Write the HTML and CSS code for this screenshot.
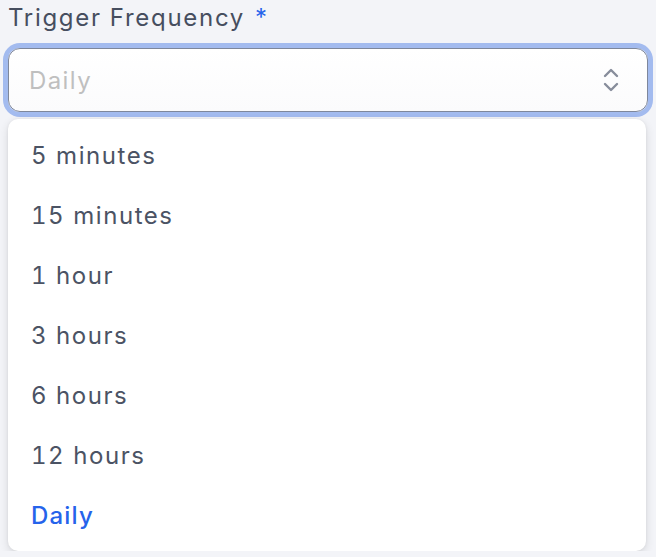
FILE: index.html
```html
<!DOCTYPE html>
<html>
<head>
<meta charset="utf-8">
<link rel="stylesheet" href="styles.css">
</head>
<body>
<div class="field">
  <label class="label">Trigger Frequency <span class="req">*</span></label>
  <div class="select">
    <span class="placeholder">Daily</span>
    <svg class="chev" width="16" height="26" viewBox="0 0 16 26" fill="none" stroke="#878d9b" stroke-width="2.4" stroke-linecap="round" stroke-linejoin="round">
      <path d="M2 9 L8 3 L14 9"/>
      <path d="M2 17 L8 23 L14 17"/>
    </svg>
  </div>
  <ul class="menu">
    <li class="item">5 minutes</li>
    <li class="item">15 minutes</li>
    <li class="item">1 hour</li>
    <li class="item">3 hours</li>
    <li class="item">6 hours</li>
    <li class="item">12 hours</li>
    <li class="item selected">Daily</li>
  </ul>
</div>
</body>
</html>
```
FILE: styles.css
```css
html, body {
  margin: 0;
  padding: 0;
  background: #f3f4f8;
  font-family: Inter, "Noto Sans", sans-serif;
  font-variant-numeric: tabular-nums;
}
.field {
  padding: 0 8px;
}
.label {
  display: block;
  font-size: 24px;
  line-height: 36px;
  color: #464e5f;
  font-weight: 400;
  letter-spacing: 1.7px;
}
.req {
  color: #2563eb;
}
.select {
  margin-top: 12px;
  height: 64px;
  box-sizing: border-box;
  border: 1.5px solid #7e879b;
  border-radius: 12px;
  box-shadow: 0 0 0 5px #a3bbef;
  background: linear-gradient(#ffffff, #fbfbfc);
  display: flex;
  align-items: center;
  justify-content: space-between;
  padding: 0 28px 0 20px;
}
.placeholder {
  font-size: 24px;
  color: #bfbfbf;
  letter-spacing: 1.4px;
}
.chev {
  display: block;
}
.menu {
  list-style: none;
  margin: 7px 2px 0 0;
  padding: 6px 0;
  background: #fff;
  border-radius: 10px;
  box-shadow: 0 3px 10px rgba(0,0,0,0.12), 0 0 3px rgba(0,0,0,0.06);
}
.item {
  height: 60px;
  display: flex;
  align-items: center;
  padding: 0 23px;
  font-size: 24px;
  color: #4b5364;
  letter-spacing: 1.55px;
}
.item.selected {
  color: #2563eb;
  font-weight: 500;
  letter-spacing: 1.2px;
}
```
